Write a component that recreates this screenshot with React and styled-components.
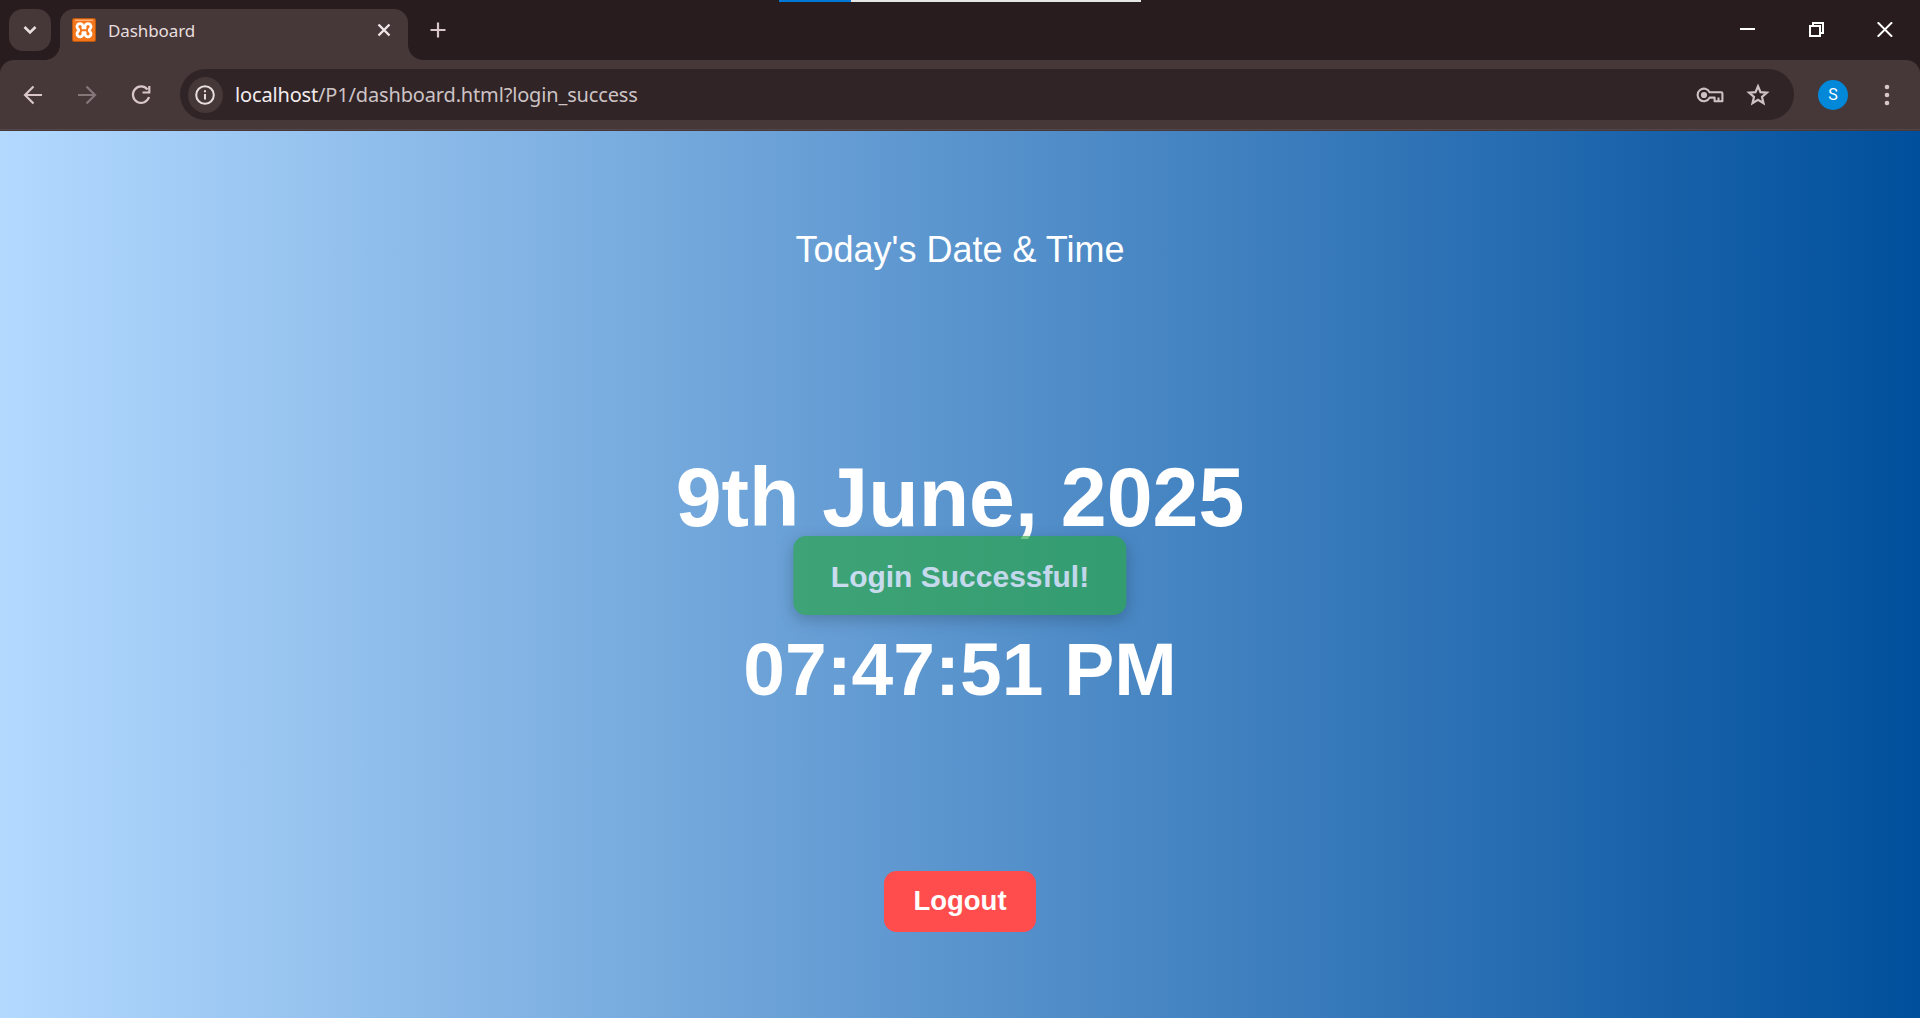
import React from "react";
import styled, { createGlobalStyle } from "styled-components";

const Global = createGlobalStyle`
  * { box-sizing: border-box; }
  body { margin: 0; background: #281c1e; font-family: "Liberation Sans", Arial, sans-serif; overflow: hidden; }
`;

const ui = `"Noto Sans", "Open Sans", sans-serif`;

const Window = styled.div`
  position: relative;
  display: flex;
  flex-direction: column;
  width: 1920px;
  height: 1018px;
  overflow: hidden;
`;
const CaptureBar = styled.div`
  position: absolute;
  top: 0;
  left: 779px;
  width: 362px;
  height: 2px;
  background: linear-gradient(90deg, #0078d7 72px, #e6e6e6 72px);
`;
const TabStrip = styled.header`
  display: flex;
  height: 60px;
  padding-left: 9px;
  background: #281c1e;
`;
const TabSearch = styled.div`
  display: grid;
  place-items: center;
  width: 42px;
  height: 42px;
  margin-top: 9px;
  border-radius: 14px;
  background: #463739;
`;
const Tab = styled.div`
  position: relative;
  display: flex;
  align-items: center;
  width: 348px;
  height: 51px;
  margin: 9px 0 0 9px;
  padding: 0 17px 9px 12px;
  border-radius: 14px 14px 0 0;
  background: #463739;
  &::before, &::after {
    content: "";
    position: absolute;
    bottom: 0;
    width: 15px;
    height: 15px;
  }
  &::before { left: -15px; background: radial-gradient(circle at 0 0, transparent 14.5px, #463739 15.2px); }
  &::after { right: -15px; background: radial-gradient(circle at 100% 0, transparent 14.5px, #463739 15.2px); }
`;
const TabTitle = styled.span`
  flex: 1;
  margin-left: 12px;
  font: 400 17px/24px ${ui};
  letter-spacing: -0.1px;
  color: #e8dedf;
  padding-top: 2px;
`;
const NewTab = styled.div`
  display: grid;
  place-items: center;
  width: 60px;
  height: 60px;
`;
const WindowButtons = styled.div`
  display: flex;
  margin-left: auto;
`;
const WindowButton = styled.div`
  display: grid;
  place-items: center;
  width: 69px;
  height: 59px;
`;
const Toolbar = styled.div`
  display: flex;
  align-items: center;
  height: 71px;
  padding: 0 20px 1px 19px;
  border-radius: 14px 14px 0 0;
  background: #463739;
  border-bottom: 1px solid #463739;
  box-shadow: inset 0 -1px 0 #544649;
`;
const ToolbarWrap = styled.div`
  background: #281c1e;
`;
const NavIcons = styled.div`
  display: flex;
  gap: 26px;
  width: 161px;
  svg { display: block; }
`;
const AddressBar = styled.div`
  display: flex;
  align-items: center;
  width: 1614px;
  height: 51px;
  padding: 0 24px 0 8px;
  border-radius: 26px;
  background: #302426;
`;
const SiteInfo = styled.div`
  display: grid;
  place-items: center;
  width: 35px;
  height: 36px;
  border-radius: 50%;
  background: #463739;
`;
const Url = styled.span`
  flex: 1;
  margin-left: 12px;
  font: 400 20px/30px ${ui};
  letter-spacing: -0.16px;
  color: #cdc3c5;
  b { font-weight: 400; color: #f3ecee; }
`;
const AddressActions = styled.div`
  display: flex;
  align-items: center;
  gap: 22px;
`;
const Avatar = styled.div`
  display: grid;
  place-items: center;
  width: 30px;
  height: 30px;
  margin-left: 24px;
  border-radius: 50%;
  background: #0288d8;
  color: #fff;
  font: 400 16px/30px Roboto, sans-serif;
`;
const MenuIcon = styled.svg`
  margin-left: auto;
`;
const Page = styled.main`
  position: relative;
  display: flex;
  flex-direction: column;
  align-items: center;
  flex: 1;
  padding-top: 98px;
  background: linear-gradient(90deg, #b3d9ff, #004f9c);
  color: #fff;
`;
const Heading = styled.h2`
  margin: 0;
  font-size: 36px;
  line-height: 42px;
  font-weight: 400;
`;
const DateText = styled.div`
  margin-top: 178px;
  font-size: 82.5px;
  line-height: 96px;
  font-weight: 700;
`;
const TimeText = styled.div`
  margin-top: 81px;
  font-size: 75px;
  line-height: 86px;
  font-weight: 700;
`;
const Logout = styled.button`
  margin-top: 159px;
  width: 152px;
  height: 61px;
  padding: 0 0 2px;
  border: 0;
  border-radius: 12.5px;
  background: #ff4d4d;
  color: #fff;
  font: 700 27.5px "Liberation Sans", Arial, sans-serif;
`;
const Toast = styled.div`
  position: absolute;
  top: 405px;
  left: 50%;
  transform: translateX(-50%);
  padding: 24px 37.5px 21px;
  border-radius: 12.5px;
  background: #28a745;
  box-shadow: 0 5px 15px rgba(0, 0, 0, 0.3);
  opacity: 0.65;
  font-size: 30px;
  line-height: 34px;
  font-weight: 700;
  white-space: nowrap;
`;

const Stroke = ({ w, h, d, color = "#d9c6ca", sw = 2, children, ...rest }) => (
  <svg width={w} height={h} viewBox={`0 0 ${w} ${h}`} fill="none" stroke={color} strokeWidth={sw} {...rest}>
    {d && <path d={d} />}
    {children}
  </svg>
);

const lobes = [[8, 8.6], [16, 8.6], [8, 15.8], [16, 15.8]];

const Favicon = () => (
  <svg width="24" height="24" viewBox="0 0 24 24">
    <rect width="24" height="24" rx="2" fill="#b9560f" />
    <rect x="1" y="1" width="22" height="22" rx="1.5" fill="#f5761a" />
    <path d="M3 2.2h18" stroke="#ffc79a" strokeWidth="1" />
    <g fill="#fff">
      {lobes.map(([x, y]) => <circle key={`${x}-${y}`} cx={x} cy={y} r="4.4" />)}
      <rect x="7" y="8.6" width="10" height="7.2" />
    </g>
    <g fill="#f5761a">
      {lobes.map(([x, y]) => <circle key={`${x}-${y}`} cx={x} cy={y} r="1.6" />)}
    </g>
    <path d="M8 8.6 9.2 12.2 8 15.8M16 8.6 14.8 12.2 16 15.8M9.2 12.2H14.8" fill="none" stroke="#f5761a" strokeWidth="2" />
  </svg>
);

export default function App() {
  return (
    <Window>
      <Global />
      <TabStrip>
        <TabSearch>
          <Stroke w={14} h={10} d="M1.5 2 7 7.5 12.5 2" color="#e8dedf" sw={2.6} />
        </TabSearch>
        <Tab>
          <Favicon />
          <TabTitle>Dashboard</TabTitle>
          <Stroke w={14} h={14} d="M1.5 1.5 12.5 12.5M12.5 1.5 1.5 12.5" color="#f0e6e8" sw={2.4} />
        </Tab>
        <NewTab>
          <Stroke w={16} h={16} d="M8 .5V15.5M.5 8H15.5" sw={2.2} />
        </NewTab>
        <WindowButtons>
          <WindowButton><Stroke w={15} h={15} d="M0 7H15" color="#fff" sw={2} /></WindowButton>
          <WindowButton>
            <Stroke w={15} h={15} d="M1 4H11V14H1ZM4 4V1H14V11H11" color="#fff" sw={2} />
          </WindowButton>
          <WindowButton><Stroke w={17} h={15} d="M.7 .3 15.1 14.7M15.1 .3 .7 14.7" color="#fff" sw={2} /></WindowButton>
        </WindowButtons>
      </TabStrip>
      <CaptureBar />
      <ToolbarWrap>
        <Toolbar>
          <NavIcons>
            <Stroke w={28} h={28} d="M23 14H7M14.5 5.5 6 14 14.5 22.5" sw={2.2} />
            <Stroke w={28} h={28} d="M5 14H21M13.5 5.5 22 14 13.5 22.5" sw={2.2} color="#85767a" />
            <Stroke w={28} h={28} d="M20.5 8.5A8.2 8.2 0 1 0 22 16M22.3 5V11.5H15.5" sw={2.2} />
          </NavIcons>
          <AddressBar>
            <SiteInfo>
              <Stroke w={21} h={20} color="#e8dedf" sw={2}>
                <circle cx="10" cy="10" r="8.8" />
                <path d="M10 9V14.5M10 5.3V7.3" />
              </Stroke>
            </SiteInfo>
            <Url><b>localhost</b>/P1/dashboard.html?login_success</Url>
            <AddressActions>
              <Stroke w={28} h={16} color="#cdc3c5" sw={2.1} strokeLinejoin="round">
                <circle cx="8" cy="8" r="3.1" fill="#cdc3c5" stroke="none" />
                <path d="M13.6 5.2A6.3 6.3 0 1 0 13.6 10.6H18.6V14.2H26.4V6.4Q26.4 5.2 25.2 5.2ZM22.5 10.4V14" />
              </Stroke>
              <Stroke w={24} h={24} color="#cdc3c5" sw={2.2} d="M12 3.2 14.5 9.1 20.9 9.7 16 13.9 17.5 20.2 12 16.8 6.5 20.2 8 13.9 3.1 9.7 9.5 9.1Z" />
            </AddressActions>
          </AddressBar>
          <Avatar>S</Avatar>
          <MenuIcon width="26" height="24" viewBox="0 0 26 24" fill="#d9c6ca">
            <circle cx="13" cy="4" r="2.3" /><circle cx="13" cy="12" r="2.3" /><circle cx="13" cy="20" r="2.3" />
          </MenuIcon>
        </Toolbar>
      </ToolbarWrap>
      <Page>
        <Heading>Today's Date &amp; Time</Heading>
        <DateText>9th June, 2025</DateText>
        <TimeText>07:47:51 PM</TimeText>
        <Logout>Logout</Logout>
        <Toast>Login Successful!</Toast>
      </Page>
    </Window>
  );
}
